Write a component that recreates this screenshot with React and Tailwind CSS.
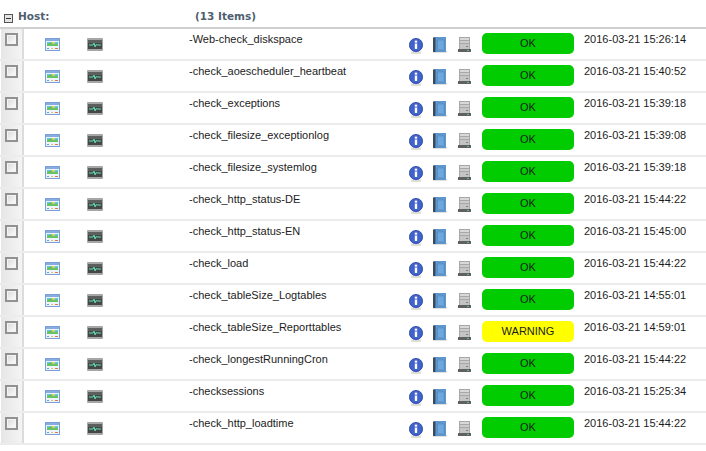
import React from "react";

const rows = [
  { name: "-Web-check_diskspace", status: "OK", time: "2016-03-21 15:26:14" },
  { name: "-check_aoescheduler_heartbeat", status: "OK", time: "2016-03-21 15:40:52" },
  { name: "-check_exceptions", status: "OK", time: "2016-03-21 15:39:18" },
  { name: "-check_filesize_exceptionlog", status: "OK", time: "2016-03-21 15:39:08" },
  { name: "-check_filesize_systemlog", status: "OK", time: "2016-03-21 15:39:18" },
  { name: "-check_http_status-DE", status: "OK", time: "2016-03-21 15:44:22" },
  { name: "-check_http_status-EN", status: "OK", time: "2016-03-21 15:45:00" },
  { name: "-check_load", status: "OK", time: "2016-03-21 15:44:22" },
  { name: "-check_tableSize_Logtables", status: "OK", time: "2016-03-21 14:55:01" },
  { name: "-check_tableSize_Reporttables", status: "WARNING", time: "2016-03-21 14:59:01" },
  { name: "-check_longestRunningCron", status: "OK", time: "2016-03-21 15:44:22" },
  { name: "-checksessions", status: "OK", time: "2016-03-21 15:25:34" },
  { name: "-check_http_loadtime", status: "OK", time: "2016-03-21 15:44:22" },
];

// small icons, hand drawn to follow the originals
function ChartIcon() {
  return (
    <svg width="15" height="13" viewBox="0 0 15 13" className="block">
      <rect x="0.5" y="0.5" width="14" height="12" fill="#eef4fc" stroke="#7ba0d6" />
      <rect x="1" y="1" width="13" height="2" fill="#86abe0" />
      <rect x="2" y="4" width="11" height="4" fill="#63c2d8" />
      <path d="M2 8 L2 6 L6 4.5 L9 6.5 L13 5.5 L13 8 Z" fill="#6cc05a" />
      <rect x="7" y="4" width="3" height="1.5" fill="#e8d94f" />
      <rect x="2" y="10" width="2" height="1" fill="#5ba0e0" />
      <rect x="6" y="10" width="2" height="1" fill="#e8c84a" />
      <rect x="10" y="10" width="3" height="1" fill="#ee6a5a" />
    </svg>
  );
}

function MonitorIcon() {
  return (
    <svg width="16" height="13" viewBox="0 0 16 13" className="block">
      <rect x="0" y="0" width="16" height="13" rx="1" fill="#a6a6a6" />
      <rect x="1" y="2" width="14" height="9" fill="#444747" />
      <rect x="1" y="2" width="14" height="3" fill="#5c5f5f" />
      <path d="M2 7 H6 L7 5 L8 9 L9 6.5 L10 7 H14" fill="none" stroke="#62e0b4" strokeWidth="1" />
    </svg>
  );
}

function InfoIcon() {
  return (
    <svg width="14" height="16" viewBox="0 0 14 16" className="block">
      <ellipse cx="7" cy="14.5" rx="5.5" ry="1.5" fill="#dcdcdc" />
      <circle cx="7" cy="7" r="6.6" fill="#3f62cc" stroke="#2a43a0" strokeWidth="0.8" />
      <rect x="5.8" y="2.6" width="2.4" height="2.1" fill="#ffffff" />
      <rect x="5.8" y="5.6" width="2.4" height="5.4" fill="#ffffff" />
    </svg>
  );
}

function BookIcon() {
  return (
    <svg width="14" height="16" viewBox="0 0 14 16" className="block">
      <rect x="0" y="14" width="14" height="2" fill="#e0e0e0" />
      <rect x="1" y="0" width="12" height="15" fill="#5f96cc" />
      <rect x="0" y="0.5" width="2.5" height="14.5" fill="#3a4c5e" />
      <rect x="4.5" y="3" width="6.5" height="10" fill="#6ea8dd" stroke="#4f88bf" strokeWidth="0.6" />
    </svg>
  );
}

function ServerIcon() {
  return (
    <svg width="13" height="15" viewBox="0 0 13 15" className="block">
      <rect x="1" y="0" width="11" height="13" fill="#a8a8a8" />
      <rect x="2" y="1" width="9" height="2" fill="#d8d8d8" />
      <rect x="2" y="4" width="9" height="2" fill="#cccccc" />
      <rect x="2" y="7" width="9" height="5" fill="#c4c4c4" />
      <rect x="8" y="9" width="2" height="1" fill="#808080" />
      <rect x="0" y="12" width="13" height="3" fill="#606060" />
      <rect x="9" y="13" width="2" height="1" fill="#43c97a" />
    </svg>
  );
}

function Row({ row }) {
  const ok = row.status === "OK";
  return (
    <div className="flex h-[32px] border-b-2 border-[#ececec] text-[11px] text-[#1c1c1c]">
      <div className="ml-px flex w-[23px] shrink-0 justify-center border-r-2 border-[#dcdcdc] bg-gradient-to-r from-[#e6e6e6] to-[#f4f4f4] pt-[4px]">
        <span className="block h-[13px] w-[13px] border-2 border-[#929292] bg-gradient-to-br from-[#d8d8d8] to-[#ffffff] shadow-[inset_0_0_0_1px_#f4f4f4]" />
      </div>
      <div className="w-[21px] shrink-0" />
      <div className="w-[42px] shrink-0 pt-[9px]">
        <ChartIcon />
      </div>
      <div className="w-[102px] shrink-0 pt-[9px]">
        <MonitorIcon />
      </div>
      <div className="w-[220px] shrink-0 pt-[3px] leading-[14px]">{row.name}</div>
      <div className="w-[24px] shrink-0 pt-[9px]">
        <InfoIcon />
      </div>
      <div className="w-[25px] shrink-0 pt-[8px]">
        <BookIcon />
      </div>
      <div className="w-[24px] shrink-0 pt-[8px]">
        <ServerIcon />
      </div>
      <div className="w-[102px] shrink-0 pt-[4px]">
        <div
          className={`flex h-[21px] w-[92px] items-center justify-center rounded-[5px] ${ok ? "bg-[#00cc00]" : "bg-[#ffff00]"}`}
        >
          {row.status}
        </div>
      </div>
      <div className="whitespace-nowrap pt-[3px] leading-[14px]">{row.time}</div>
    </div>
  );
}

export default function App() {
  return (
    <div className="h-[451px] w-[706px] overflow-hidden bg-white font-['Liberation_Sans',Arial,sans-serif]">
      <div className="flex h-[27px] items-end pb-[2px] font-['DejaVu_Sans',sans-serif] text-[10.5px] font-bold text-[#4f5f70]">
        <span className="mb-[2px] ml-[4px] flex h-[9px] w-[9px] items-center justify-center border border-[#555] bg-[#e4e4e4]">
          <span className="block h-px w-[5px] bg-[#333]" />
        </span>
        <span className="ml-[5px] w-[177px]">Host:</span>
        <span>(13 Items)</span>
      </div>
      <div className="h-[2px] bg-[#d0d0d0]" />
      {rows.map((row) => (
        <Row key={row.name} row={row} />
      ))}
    </div>
  );
}
